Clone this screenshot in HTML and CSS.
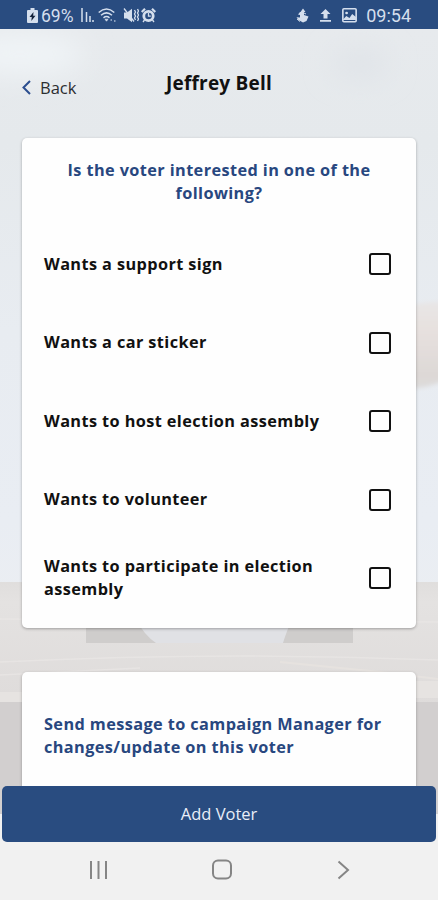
FILE: index.html
```html
<!DOCTYPE html>
<html lang="en">
<head>
<meta charset="utf-8">
<title>Jeffrey Bell</title>
<link rel="stylesheet" href="styles.css">
</head>
<body>
<div class="phone">
  <header class="status">
    <div class="status-left">
      <svg class="battery" width="11" height="15" viewBox="0 0 11 15"><path d="M3.5 0h4v2H10a1 1 0 0 1 1 1v11a1 1 0 0 1-1 1H1a1 1 0 0 1-1-1V3a1 1 0 0 1 1-1h2.500z" fill="#d5dfed"/><path d="M6.500 4 2.500 9h2.300L4.300 13 8.500 7.800H6.200z" fill="#15233b"/></svg>
      <span class="percent">69%</span>
      <svg class="signal" width="13" height="15" viewBox="0 0 13 15" stroke="#d5dfed" stroke-width="1.500"><path d="M1 0v14M5.500 4v10M9 8v6M12 12v2"/></svg>
      <svg class="wifi" width="19" height="15" viewBox="0 0 19 15" fill="none" stroke="#d5dfed" stroke-width="1.500"><path d="M.7 4.500Q8.500-2.500 16.300 4.500M3 7.200q5.500-4.700 11 0M5.500 9.800q3-2.500 6 0"/><path d="M7 11.200h3l-1.500 2z" fill="#d5dfed" stroke-width=".7"/><path d="M12.500 12h1.500M16 13h1.500" stroke="#a9bad3"/></svg>
      <svg class="mute" width="16" height="15" viewBox="0 0 16 15"><path d="M1 4.500h3L9 .8v13.400L4 10.500H1z" fill="#d5dfed"/><path d="m1 .5 10 13M11.500 2l1 2-1 2 1 2-1 2 1 2M14.500 1l1 2-1 2 1 2-1 2 1 2-1 2" stroke="#d5dfed" stroke-width="1.300" fill="none"/></svg>
      <svg class="alarm" width="15" height="15" viewBox="0 0 15 15" fill="none" stroke="#d5dfed"><circle cx="7.500" cy="8" r="4.700" stroke-width="2.800"/><path d="M.7 4 4 .8M11 .8 14.300 4" stroke-width="2.200"/><path d="M7.500 5v3.200h2.300M3.500 12 2 14M11.500 12l1.500 2" stroke-width="1.300"/></svg>
    </div>
    <div class="status-right">
      <svg class="touch" width="13" height="15" viewBox="0 0 13 15" fill="#d5dfed"><path d="M4.500 4 7 .5 9.500 4H8v3l4.500 1.500-2 4.500-3.500 1.500L2.500 12 .5 9.200 4 9.500V7L2 6.500 4 4z"/><path d="m1 11 3 2.500M8 5l2 1" stroke="#d5dfed"/></svg>
      <svg class="upload" width="11" height="13" viewBox="0 0 11 13" fill="#d5dfed"><path d="M5.500 0 10.500 5H7.500v4.500h-4V5H.5zM0 11h11v1.700H0z"/></svg>
      <svg class="picture" width="15" height="15" viewBox="0 0 14 15" preserveAspectRatio="none"><rect x=".8" y=".8" width="12.400" height="13" rx="1" fill="none" stroke="#d5dfed" stroke-width="1.500"/><circle cx="4.300" cy="5" r="1.300" fill="#d5dfed"/><path d="M1 11.500 4 8l3 2 2.500-4L13 9v3H1z" fill="#d5dfed"/></svg>
      <span class="clock">09:54</span>
    </div>
  </header>

  <main class="screen">
    <svg class="backdrop" viewBox="0 0 438 757" width="438" height="757">
      <defs>
        <linearGradient id="wall" x2="0" y2="1"><stop offset="0" stop-color="#e7eaed"/><stop offset=".15" stop-color="#e5e9ec"/><stop offset=".4" stop-color="#e8ecf1"/><stop offset=".65" stop-color="#e9edf3"/><stop offset=".77" stop-color="#ebeef2"/></linearGradient>
        <linearGradient id="table" x2="0" y2="1"><stop offset="0" stop-color="#e0dedd"/><stop offset=".1" stop-color="#e4e2e1"/><stop offset=".63" stop-color="#dedbda"/><stop offset="1" stop-color="#dddbda"/></linearGradient>
        <linearGradient id="hand" x2="0" y2="1"><stop offset="0" stop-color="#e8e6e6"/><stop offset=".3" stop-color="#e7e1df"/><stop offset=".85" stop-color="#ddd8d6"/><stop offset="1" stop-color="#dddcdc"/></linearGradient>
        <filter id="soft" x="-20%" y="-20%" width="140%" height="140%"><feGaussianBlur stdDeviation="2"/></filter>
        <filter id="haze" x="-80%" y="-100%" width="260%" height="300%"><feGaussianBlur stdDeviation="14"/></filter>
      </defs>
      <rect width="438" height="757" fill="url(#wall)"/>
      <ellipse cx="20" cy="25" rx="65" ry="20" fill="#f0f4f7" filter="url(#haze)"/>
      <ellipse cx="360" cy="35" rx="28" ry="14" fill="#dfe3e8" filter="url(#haze)"/>
      <path d="M405 278q20-6 45-5v75q-18 12-45 12z" fill="url(#hand)" filter="url(#soft)"/>
      <path d="M0 553h438v204H0z" fill="url(#table)"/>
      <path d="M0 590 438 593M0 633q220-11 438-2M0 646l140-7" stroke="#e9e7e5" stroke-width="1.500" opacity=".7" fill="none"/>
      <path d="M86 590h267v24H86z" fill="#cfcdcc"/>
      <path d="M136 590q8 16 20 24h127q3-10 9-24z" fill="#e0e1e5"/>
      <path d="M280 633 380 643 438 650" stroke="#e6e2df" stroke-width="2" fill="none"/>
      <path d="M0 663h22v10H0zM416 652h22v17h-22z" fill="#e6e3e1"/>
      <path d="M0 673h438v84H0z" fill="#d2cfcf"/>
    </svg>

    <nav class="topbar">
      <a class="back"><svg width="9" height="15" viewBox="0 0 9 15" fill="none" stroke="#2b4e8f" stroke-width="2"><path d="M8 1 1.500 7.500 8 14"/></svg><span>Back</span></a>
      <h1 class="name">Jeffrey Bell</h1>
    </nav>

    <section class="card interests">
      <h2 class="question">Is the voter interested in one of the following?</h2>
      <label class="option"><span class="support">Wants a support sign</span><i class="box"></i></label>
      <label class="option"><span>Wants a car sticker</span><i class="box"></i></label>
      <label class="option"><span>Wants to host election assembly</span><i class="box"></i></label>
      <label class="option"><span>Wants to volunteer</span><i class="box"></i></label>
      <label class="option"><span>Wants to participate in election assembly</span><i class="box"></i></label>
    </section>

    <section class="card message">
      <h2>Send message to campaign Manager for changes/update on this voter</h2>
    </section>
  </main>

  <div class="action"><button class="add">Add Voter</button></div>

  <footer class="softkeys">
    <svg width="20" height="20" viewBox="0 0 20 20" stroke="#858585" stroke-width="2"><path d="M2 1v18M9.500 1v18M17 1v18"/></svg>
    <svg width="22" height="22" viewBox="0 0 22 22" fill="none" stroke="#858585" stroke-width="2"><rect x="0" y="1.500" width="18" height="18" rx="5" transform="translate(1)"/></svg>
    <svg width="14" height="20" viewBox="0 0 14 20" fill="none" stroke="#858585" stroke-width="2"><path d="m2.500 1.500 9.500 8.500-9.500 8.500"/></svg>
  </footer>
</div>
</body>
</html>
```
FILE: styles.css
```css
* { box-sizing: border-box; }

body {
  margin: 0;
  font-family: "Open Sans", "Noto Sans", sans-serif;
}

.phone {
  width: 438px;
  height: 900px;
  display: flex;
  flex-direction: column;
  overflow: hidden;
  background: #f1f1f1;
}

.status {
  height: 29px;
  flex: none;
  display: flex;
  align-items: center;
  justify-content: space-between;
  padding: 2px 27px 0;
  background: #294c80;
  color: #d5dfed;
  font-family: Roboto, sans-serif;
  font-size: 18px;
  line-height: 26px;
}

.status-left,
.status-right {
  display: flex;
  align-items: center;
}

.status svg { display: block; flex: none; }
.percent { margin-left: 3px; width: 35px; font-size: 17.5px; }
.signal { margin-left: 5px; }
.wifi { margin-left: 4px; }
.mute { margin-left: 6px; }
.alarm { margin-left: 2px; }
.upload { margin-left: 11px; }
.picture { margin-left: 11px; }
.clock { margin-left: 9px; }

.screen {
  position: relative;
  height: 757px;
  flex: none;
  padding: 0 22px;
  overflow: hidden;
}

.backdrop {
  position: absolute;
  inset: 0;
}

.topbar {
  position: relative;
  height: 109px;
  display: grid;
  grid-template-columns: 110px 1fr 110px;
  align-items: center;
}

.back {
  display: flex;
  align-items: center;
  gap: 9px;
  padding-top: 8px;
  font-size: 16.5px;
  line-height: 24px;
  color: #2c2e31;
}

.name {
  margin: 0 0 2px;
  font-size: 19px;
  line-height: 26px;
  font-weight: 700;
  letter-spacing: .2px;
  text-align: center;
  white-space: nowrap;
  color: #111;
}

.card {
  position: relative;
  background: #fefefe;
  border-radius: 5px;
  box-shadow: 0 1px 3px rgba(0, 0, 0, .3);
}

.card h2 {
  margin: 0;
  font-size: 16.3px;
  line-height: 23px;
  font-weight: 700;
  letter-spacing: .4px;
  color: #28477f;
}

.interests {
  width: 394px;
  height: 490px;
  padding: 20.5px 25px 0 22px;
}

.card .question {
  height: 66.5px;
  padding: 0 20px 0 23px;
  text-align: center;
}

.option {
  height: 78.5px;
  display: flex;
  align-items: center;
  justify-content: space-between;
  font-size: 16.3px;
  line-height: 23px;
  font-weight: 700;
  letter-spacing: .4px;
  color: #111;
}

.option span { width: 290px; }

.box {
  width: 22px;
  height: 22px;
  border: 2px solid #111;
  border-radius: 3px;
}

.message {
  width: 394px;
  height: 180px;
  margin-top: 44px;
  padding: 41px 22px;
}

.action {
  height: 56px;
  flex: none;
  padding: 0 2px;
  background: linear-gradient(#d2cfcf 50%, #f1f1f1 50%);
}

.add {
  display: block;
  width: 434px;
  height: 56px;
  padding: 0;
  border: 0;
  border-radius: 5px;
  background: #294c80;
  color: #e9eff8;
  font: 400 16.5px/54px "Open Sans", sans-serif;
}

.softkeys {
  flex: 1;
  display: flex;
  align-items: center;
  justify-content: space-between;
  padding: 0 88px 2px 89px;
}
```
